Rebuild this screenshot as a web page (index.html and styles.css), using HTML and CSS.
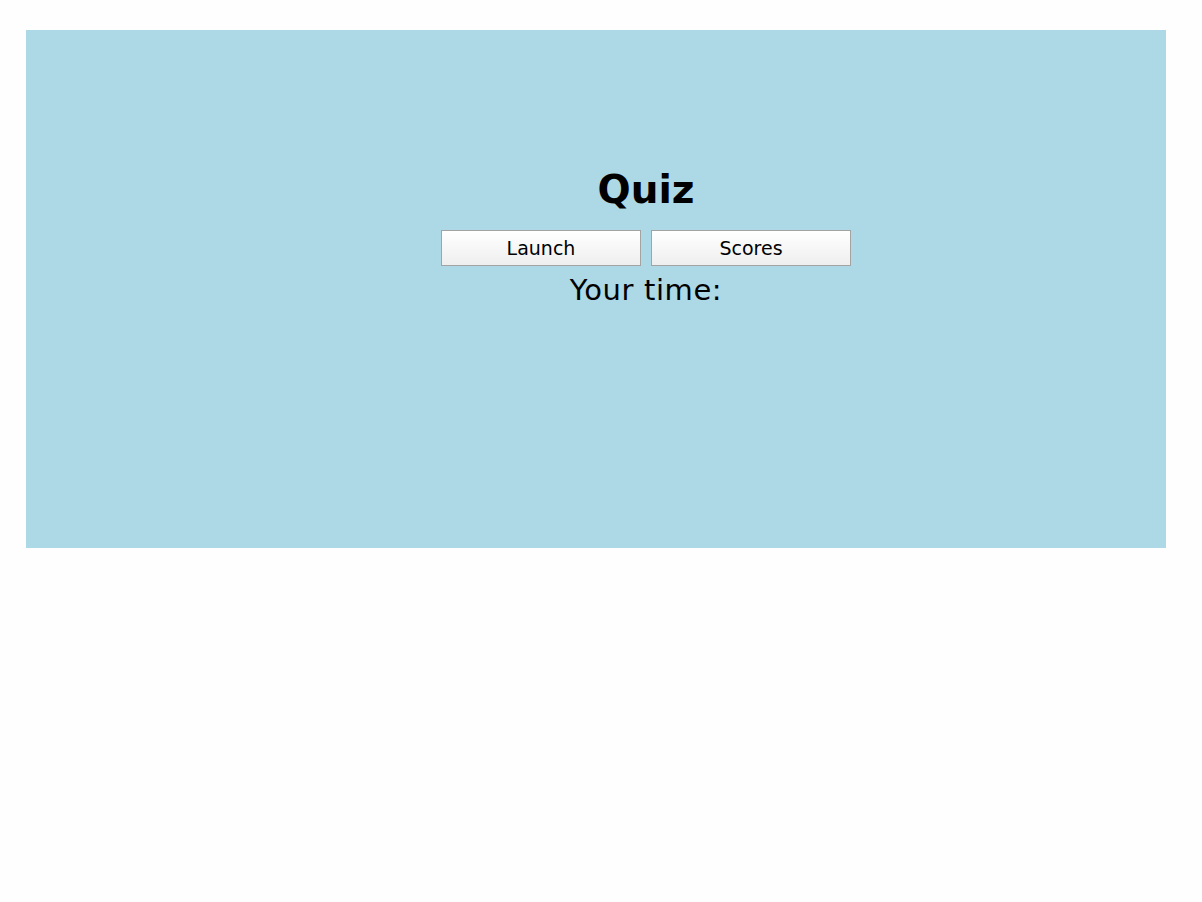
FILE: index.html
```html
<!DOCTYPE html>
<html>
<head>
<meta charset="utf-8">
<link rel="stylesheet" href="styles.css">
<title>Quiz</title>
</head>
<body>
<main class="panel">
  <h1 class="title">Quiz</h1>
  <div class="actions">
    <button class="btn">Launch</button>
    <button class="btn">Scores</button>
  </div>
  <p class="time">Your time:</p>
</main>
</body>
</html>
```
FILE: styles.css
```css
html, body {
  margin: 0;
  padding: 0;
  background: #fefefe;
}
body {
  padding: 30px 36px 0 26px;
  font-family: "DejaVu Sans", sans-serif;
  color: #000;
}
.panel {
  background: #add8e6;
  height: 518px;
  box-sizing: border-box;
  padding-top: 134px;
  padding-left: 100px;
  display: flex;
  flex-direction: column;
  align-items: center;
}
.title {
  margin: 0;
  font-size: 39px;
  line-height: 52px;
  font-weight: bold;
}
.actions {
  display: flex;
  gap: 10px;
  margin-top: 14px;
}
.btn {
  width: 200px;
  height: 36px;
  box-sizing: border-box;
  border: 1px solid #a3a3a3;
  border-radius: 0;
  background: linear-gradient(#ffffff, #eeeeee);
  font-family: "DejaVu Sans", sans-serif;
  font-size: 19px;
  color: #000;
  padding: 0;
}
.time {
  margin: 0;
  font-size: 29px;
  line-height: 48px;
  letter-spacing: 0.6px;
}
```
